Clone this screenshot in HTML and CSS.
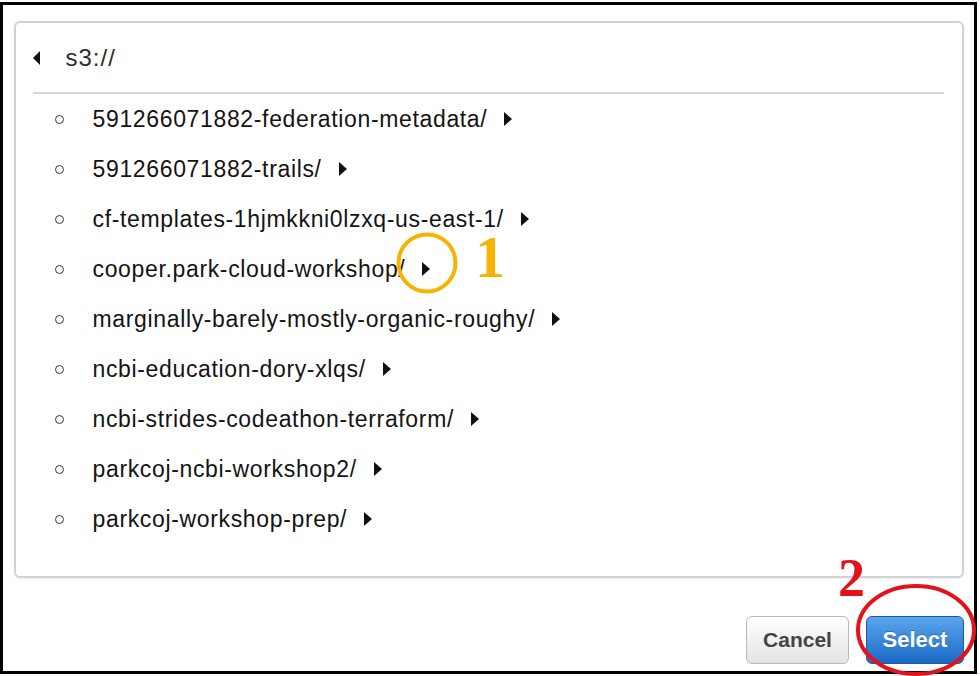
FILE: index.html
```html
<!DOCTYPE html>
<html>
<head>
<meta charset="utf-8">
<link rel="stylesheet" href="styles.css">
</head>
<body>
<div class="frame">
  <div class="panel">
    <div class="crumb">
      <span class="back"></span>
      <span class="path">s3://</span>
    </div>
    <ul class="list">
      <li><span class="dot"></span><span class="name">591266071882-federation-metadata/</span><span class="go"></span></li>
      <li><span class="dot"></span><span class="name">591266071882-trails/</span><span class="go"></span></li>
      <li><span class="dot"></span><span class="name">cf-templates-1hjmkkni0lzxq-us-east-1/</span><span class="go"></span></li>
      <li><span class="dot"></span><span class="name">cooper.park-cloud-workshop/</span><span class="go"></span></li>
      <li><span class="dot"></span><span class="name">marginally-barely-mostly-organic-roughy/</span><span class="go"></span></li>
      <li><span class="dot"></span><span class="name">ncbi-education-dory-xlqs/</span><span class="go"></span></li>
      <li><span class="dot"></span><span class="name">ncbi-strides-codeathon-terraform/</span><span class="go"></span></li>
      <li><span class="dot"></span><span class="name">parkcoj-ncbi-workshop2/</span><span class="go"></span></li>
      <li><span class="dot"></span><span class="name">parkcoj-workshop-prep/</span><span class="go"></span></li>
    </ul>
  </div>
  <div class="actions">
    <button class="btn cancel">Cancel</button>
    <button class="btn select">Select</button>
  </div>
</div>
<svg class="marks" width="980" height="676" viewBox="0 0 980 676">
  <circle cx="427" cy="263" r="28.5" fill="none" stroke="#f4b400" stroke-width="4"/>
  <ellipse cx="916" cy="630" rx="58" ry="44" fill="none" stroke="#e3121b" stroke-width="4"/>
  <text class="num one" x="475" y="277">1</text>
  <text class="num two" x="838" y="596">2</text>
</svg>
</body>
</html>
```
FILE: styles.css
```css
* { box-sizing: border-box; }
html, body { margin: 0; padding: 0; background: #fff; }
body {
  position: relative;
  width: 980px;
  height: 676px;
  overflow: hidden;
  font-family: "Liberation Sans", Arial, sans-serif;
}
.frame {
  margin-top: 2px;
  width: 977px;
  height: 672px;
  border: 3.5px solid #000;
  padding: 16px 10px 7px 10.5px;
  display: flex;
  flex-direction: column;
}
.panel {
  height: 557px;
  border: 2px solid #d2d2d2;
  border-radius: 6px;
  box-shadow: 0 1px 2px rgba(0,0,0,0.08);
  padding: 0 18px 0 17px;
}
.crumb {
  height: 71px;
  border-bottom: 2px solid #d6d6d6;
  display: flex;
  align-items: center;
  padding-top: 1px;
}
.back {
  width: 0; height: 0;
  border-right: 7px solid #111;
  border-top: 7.5px solid transparent;
  border-bottom: 7.5px solid transparent;
}
.path {
  margin-left: 26px;
  font-size: 24px;
  letter-spacing: 1px;
  color: #2e2e2e;
}
.list {
  list-style: none;
  margin: 0;
  padding: 0 0 0 22px;
}
.list li {
  height: 50px;
  display: flex;
  align-items: center;
}
.dot {
  width: 9px; height: 9px;
  border: 1.8px solid #3a3a3a;
  border-radius: 50%;
  flex: none;
}
.name {
  margin-left: 29px;
  font-size: 23px;
  letter-spacing: 0.65px;
  color: #141414;
}
.go {
  margin-left: 17px;
  width: 0; height: 0;
  border-left: 8px solid #111;
  border-top: 7px solid transparent;
  border-bottom: 7px solid transparent;
}
.actions {
  margin-top: auto;
  display: flex;
  justify-content: flex-end;
  gap: 17px;
}
.btn {
  height: 48px;
  border-radius: 6px;
  font-family: "Liberation Sans", Arial, sans-serif;
  font-weight: bold;
  font-size: 21px;
  padding: 0;
}
.cancel {
  width: 103px;
  color: #444;
  background: linear-gradient(#ffffff, #e4e4e4);
  border: 1.5px solid #b8b8b8;
}
.select {
  width: 98px;
  color: #fff;
  font-size: 22px;
  background: linear-gradient(#5aa6ee, #1c69c6);
  border: 1.5px solid #1b58a6;
  text-shadow: 0 -1px 0 rgba(0,0,0,0.25);
}
.marks {
  position: absolute;
  left: 0;
  top: 0;
  pointer-events: none;
}
.num {
  font-family: "Liberation Serif", "Times New Roman", serif;
  font-weight: bold;
}
.one {
  font-size: 60px;
  fill: #f4b400;
}
.two {
  font-size: 54px;
  fill: #e3121b;
}
```
